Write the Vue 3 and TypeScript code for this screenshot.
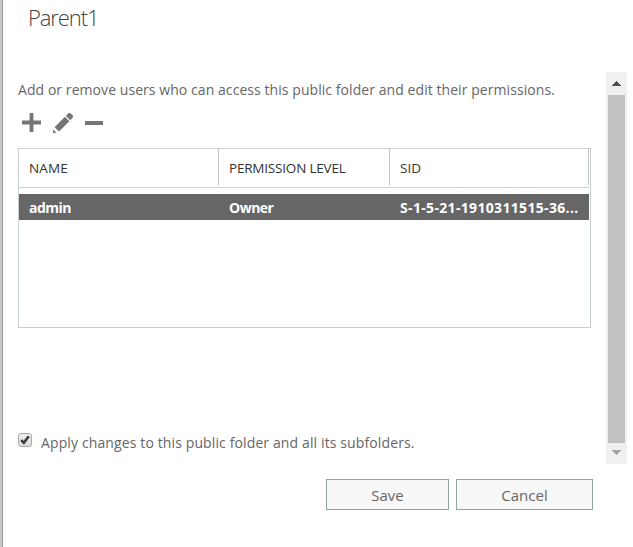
<script setup lang="ts">
import { ref } from 'vue'

interface Permission {
  name: string
  level: string
  sid: string
}

const folder = 'Parent1'
const permissions = ref<Permission[]>([
  { name: 'admin', level: 'Owner', sid: 'S-1-5-21-1910311515-36...' },
])
const applyToSubfolders = ref(true)
</script>

<template>
  <main class="dialog">
    <h1 class="title"><span>{{ folder }}</span></h1>
    <div class="body">
      <section class="content">
        <p class="intro"><span>Add or remove users who can access this public folder and edit their permissions.</span></p>
        <div class="toolbar">
          <svg class="icon add" viewBox="0 0 19 19"><path d="M7.6 0h3.8v7.6H19v3.8h-7.6V19H7.6v-7.6H0V7.6h7.6z" /></svg>
          <svg class="icon edit" viewBox="0 0 20 20"><path d="M0 20v-3.5l3.5 3.4zM1.6 14.2l10.3-10.4 4.5 4.5L6 18.6q-.9-1.3-2-1.6-.4-1.6-2.4-2.8zM12.9 2.9l2.3-2.3q1.2-1.2 2.6-.2l1.8 1.8q1.1 1.2-.1 2.5l-2.2 2.6z" /></svg>
          <svg class="icon remove" viewBox="0 0 18 4"><path d="M0 0h18v4H0z" /></svg>
        </div>
        <div class="grid">
          <div class="row head">
            <div class="cell"><span>NAME</span></div>
            <div class="cell"><span class="h-level">PERMISSION LEVEL</span></div>
            <div class="cell"><span>SID</span></div>
          </div>
          <div v-for="p in permissions" :key="p.sid" class="row selected">
            <div class="cell"><span>{{ p.name }}</span></div>
            <div class="cell"><span>{{ p.level }}</span></div>
            <div class="cell"><span class="v-sid">{{ p.sid }}</span></div>
          </div>
        </div>
        <label class="apply">
          <input v-model="applyToSubfolders" type="checkbox" class="native" />
          <span class="box">
            <svg v-if="applyToSubfolders" viewBox="0 0 12 12"><path d="M2.2 6.2l2.6 2.6 5-6.6" /></svg>
          </span>
          <span class="apply-text">Apply changes to this public folder and all its subfolders.</span>
        </label>
      </section>
      <div class="scrollbar">
        <svg class="arrow up" viewBox="0 0 9 5" shape-rendering="crispEdges"><path d="M4 0h1v1h1v1h1v1h1v1h1v1H0V4h1V3h1V2h1V1h1z" /></svg>
        <div class="thumb"></div>
        <svg class="arrow down" viewBox="0 0 9 5" shape-rendering="crispEdges"><path d="M0 0h9v1H8v1H7v1H6v1H5v1H4V4H3V3H2V2H1V1H0z" /></svg>
      </div>
    </div>
    <footer class="actions">
      <button class="save"><span>Save</span></button>
      <button class="cancel"><span>Cancel</span></button>
    </footer>
  </main>
</template>

<style>
body {
  background: #fff;
}
</style>

<style scoped>
* {
  box-sizing: border-box;
}
.dialog {
  width: 633px;
  height: 547px;
  overflow: hidden;
  border-left: 2px solid #cacaca;
  box-shadow: inset 1px 0 #999;
  background: #fff;
  color: #666;
  font: 14px/20px 'Open Sans', 'Noto Sans', sans-serif;
  white-space: nowrap;
}
.title {
  height: 72px;
  margin: 0;
  padding: 3px 0 0 26px;
  color: #444;
  font-size: 22px;
  font-weight: 300;
  line-height: 28px;
  letter-spacing: -1.1px;
}
.body {
  display: flex;
  height: 392px;
}
.content {
  width: 604px;
  padding: 8px 0 0 16px;
}
.intro {
  margin: 0;
  letter-spacing: 0.065px;
}
.toolbar {
  display: flex;
  align-items: center;
  height: 48px;
  padding: 0 0 3px 4px;
}
.icon {
  fill: #757575;
}
.add {
  width: 19px;
  height: 19px;
}
.edit {
  width: 20px;
  height: 20px;
  margin-left: 12px;
}
.remove {
  width: 18px;
  height: 4px;
  margin-left: 12px;
}
.grid {
  width: 573px;
  height: 180px;
  border: 1px solid #c8d0d2;
}
.row {
  display: grid;
  grid-template-columns: 200px 171px 199px;
  width: 570px;
}
.head {
  height: 39px;
  padding-bottom: 2px;
  border-bottom: 1px solid #c8d0d2;
  color: #333;
  font-size: 13.5px;
}
.head .cell {
  padding: 9px 0 0 10px;
  border-right: 1px solid #c3c3c3;
}
.head span {
  letter-spacing: 0.1px;
}
.head .h-level {
  letter-spacing: -0.2px;
}
.selected {
  height: 26px;
  margin-top: 6px;
  background: #666;
  color: #fff;
  font-weight: 700;
}
.selected .cell {
  padding: 4px 0 0 10px;
}
.selected span {
  letter-spacing: -0.5px;
}
.selected .v-sid {
  letter-spacing: 0.33px;
}
.apply {
  display: flex;
  align-items: center;
  height: 20px;
  margin-top: 105px;
}
.native {
  position: absolute;
  opacity: 0;
}
.box {
  width: 14px;
  height: 14px;
  margin-bottom: 6px;
  border: 1px solid #aaa;
  border-radius: 3px;
  background: linear-gradient(#eee, #dcdcdc);
}
.box svg {
  display: block;
  width: 12px;
  height: 12px;
  fill: none;
  stroke: #3c3c3c;
  stroke-width: 2.6;
}
.apply-text {
  margin-left: 9px;
  letter-spacing: 0.12px;
}
.scrollbar {
  display: flex;
  flex-direction: column;
  align-items: center;
  width: 21px;
  height: 392px;
  background: #f0f0f0;
}
.arrow {
  width: 9px;
  height: 5px;
}
.up {
  margin: 9px 0;
  fill: #505050;
}
.thumb {
  width: 17px;
  height: 348px;
  background: #c1c1c1;
}
.down {
  margin-top: 7px;
  fill: #a3a3a3;
}
.actions {
  display: flex;
  gap: 7px;
  padding: 15px 0 0 324px;
}
.actions button {
  height: 31px;
  padding: 0;
  border: 1px solid #95a2a3;
  background: #f8f8f8;
  color: #666;
  font: inherit;
  font-size: 15px;
}
.actions .save {
  width: 123px;
}
.actions .cancel {
  width: 137px;
}
</style>
